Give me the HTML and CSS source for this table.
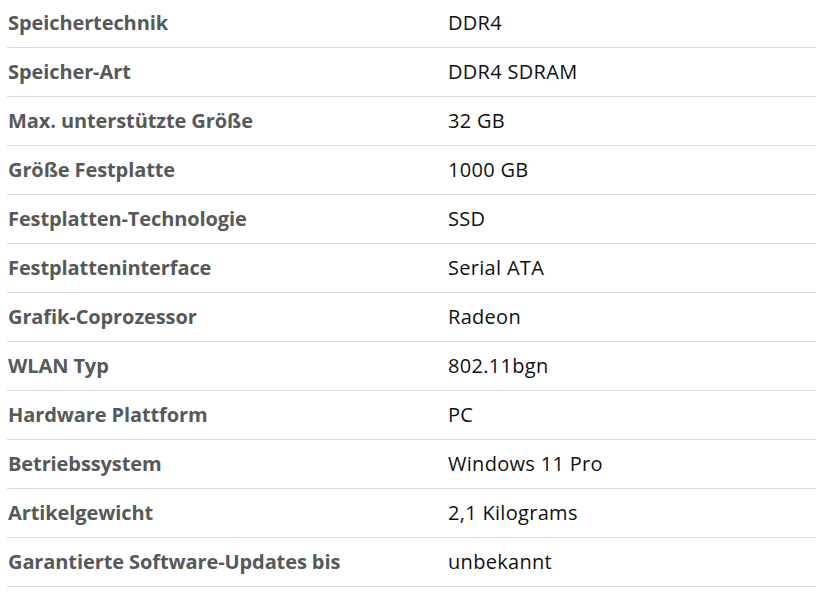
FILE: index.html
```html
<!DOCTYPE html>
<html lang="de">
<head>
<meta charset="utf-8">
<title>Technische Details</title>
<link rel="stylesheet" href="styles.css">
</head>
<body>
<table class="specs">
  <tbody>
    <tr><th>Speichertechnik</th><td>DDR4</td></tr>
    <tr><th>Speicher-Art</th><td>DDR4 SDRAM</td></tr>
    <tr><th>Max. unterstützte Größe</th><td>32 GB</td></tr>
    <tr><th>Größe Festplatte</th><td>1000 GB</td></tr>
    <tr><th>Festplatten-Technologie</th><td>SSD</td></tr>
    <tr><th>Festplatteninterface</th><td>Serial ATA</td></tr>
    <tr><th>Grafik-Coprozessor</th><td>Radeon</td></tr>
    <tr><th>WLAN Typ</th><td>802.11bgn</td></tr>
    <tr><th>Hardware Plattform</th><td>PC</td></tr>
    <tr><th>Betriebssystem</th><td>Windows 11 Pro</td></tr>
    <tr><th>Artikelgewicht</th><td>2,1 Kilograms</td></tr>
    <tr><th>Garantierte Software-Updates bis</th><td>unbekannt</td></tr>
  </tbody>
</table>
</body>
</html>
```
FILE: styles.css
```css
html, body {
  margin: 0;
  padding: 0;
  background: #ffffff;
}
body {
  font-family: "Open Sans", "Noto Sans", sans-serif;
  font-size: 20px;
}
.specs {
  margin: -1px 0 0 7px;
  width: 809px;
  border-collapse: collapse;
  table-layout: fixed;
}
.specs th,
.specs td {
  height: 46px;
  padding: 0 0 2px 1px;
  vertical-align: middle;
  text-align: left;
  border-bottom: 1px solid #d8d8d8;
  white-space: nowrap;
}
.specs th {
  width: 439px;
  font-weight: 700;
  letter-spacing: -0.1px;
  color: #565959;
}
.specs td {
  font-weight: 400;
  letter-spacing: 0.3px;
  color: #0f1111;
}
```
